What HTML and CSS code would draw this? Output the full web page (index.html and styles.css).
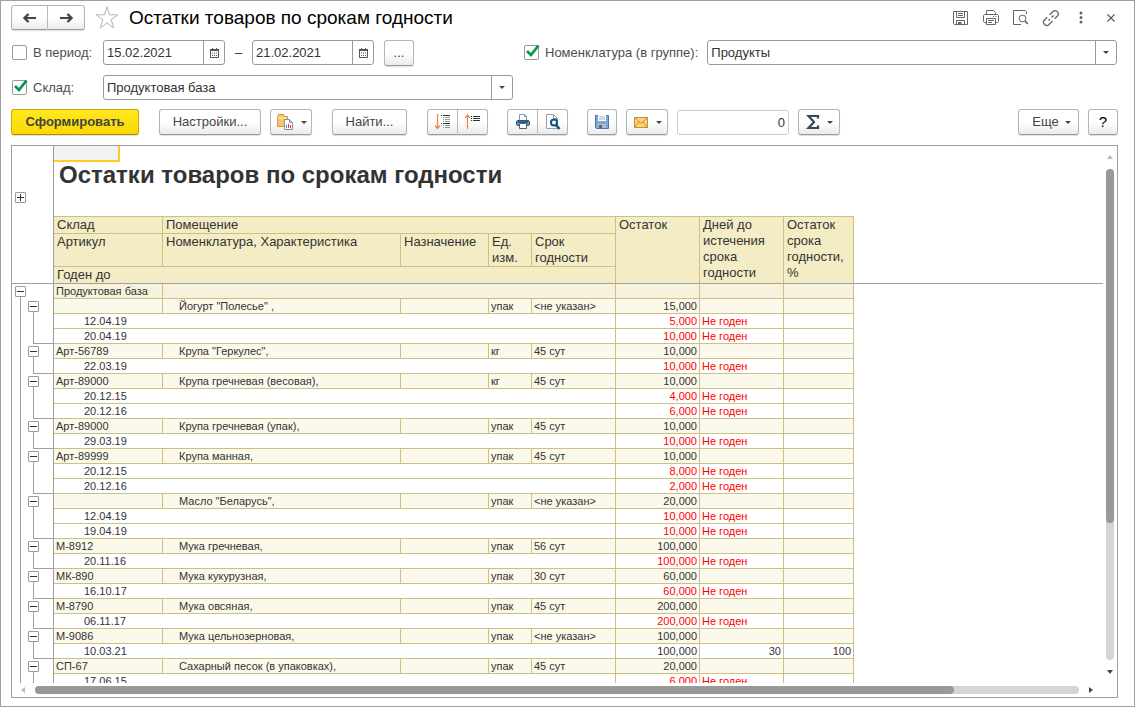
FILE: index.html
```html
<!DOCTYPE html>
<html lang="ru">
<head>
<meta charset="utf-8">
<title>Остатки товаров по срокам годности</title>
<link rel="stylesheet" href="styles.css">
</head>
<body>
<main class="window">
  <header class="titlebar">
    <div class="pair nav">
      <button class="btn" type="button" aria-label="Назад"><svg width="16" height="12" viewBox="0 0 16 12"><path d="M2 6h12" stroke="#444" stroke-width="2"/><path d="M6.500 2L2.500 6l4 4" fill="none" stroke="#444" stroke-width="2.400"/></svg></button>
      <button class="btn" type="button" aria-label="Вперед"><svg width="16" height="12" viewBox="0 0 16 12"><path d="M2 6h12" stroke="#444" stroke-width="2"/><path d="M9.500 2l4 4-4 4" fill="none" stroke="#444" stroke-width="2.400"/></svg></button>
    </div>
    <button class="plain star" type="button" aria-label="Избранное"><svg width="24" height="24" viewBox="0 0 24 24"><path d="M12 .800l2.600 8h8.200l-6.600 4.900 2.500 8.300-6.700-5-6.700 5 2.500-8.300L1.200 8.800h8.200z" fill="#fff" stroke="#adb2ba" stroke-width="1"/></svg></button>
    <h1 class="title">Остатки товаров по срокам годности</h1>
    <div class="window-tools">
      <button class="plain" type="button" aria-label="Сохранить"><svg width="16" height="16" viewBox="0 0 16 16" fill="none" stroke="#666"><path d="M.5 1.500h14v13h-13l-1-1zM3.500 1.500v6h8v-6M5 3.500h5M5 5.500h5M3.500 14.500v-4h8v4"/><path d="M5 12h3.500v2H5z" fill="#666" stroke="none"/></svg></button>
      <button class="plain" type="button" aria-label="Печать"><svg width="16" height="16" viewBox="0 0 16 16" fill="none" stroke="#666"><path d="M3.500 4.500v-4h7l2 2v2M3.500 12.500h-2l-1-1v-6l1-1h13l1 1v6l-1 1h-2M3.500 8.500h9v6h-9zM5 10.500h6M5 12.500h4M10 6.500h1M12.500 6.500h1"/></svg></button>
      <button class="plain" type="button" aria-label="Просмотр"><svg width="16" height="16" viewBox="0 0 16 16" fill="none" stroke="#666"><path d="M13.500 4V1.500l-1-1H.5v14H8"/><circle cx="9.500" cy="8.500" r="3.400"/><path d="M12 11l2.800 3" stroke-width="1.800"/></svg></button>
      <button class="plain" type="button" aria-label="Ссылка"><svg width="18" height="18" viewBox="0 0 18 18" fill="none" stroke="#666" stroke-width="1.300"><path d="M7.500 6l3.700-3.700a2.600 2.600 0 0 1 3.700 0l.8.800a2.600 2.600 0 0 1 0 3.700l-3 3M5.200 8.300l-3 3a2.600 2.600 0 0 0 0 3.700l.8.800a2.600 2.600 0 0 0 3.700 0l3.800-3.800M6.500 11.500L8 10M9.500 8.500L11.500 6.500"/></svg></button>
      <button class="plain" type="button" aria-label="Меню"><svg width="4" height="13" viewBox="0 0 4 13" fill="#666"><circle cx="2" cy="2" r="1.500"/><circle cx="2" cy="6.500" r="1.500"/><circle cx="2" cy="11" r="1.500"/></svg></button>
      <button class="plain" type="button" aria-label="Закрыть"><svg width="8" height="8" viewBox="0 0 8 8"><path d="M.5.500l7 7M7.500.500l-7 7" stroke="#555" stroke-width="1.100"/></svg></button>
    </div>
  </header>

  <form class="filters">
    <div class="filter-row">
      <div class="caption">
        <span class="check"><input type="checkbox" id="period"></span>
        <label for="period">В период:</label>
      </div>
      <div class="field date">
        <input type="text" value="15.02.2021" aria-label="Начало периода">
        <button type="button" aria-label="Календарь"><svg width="9" height="10" viewBox="0 0 9 10"><path d="M.5 1.500h8v8h-8z" fill="#fff" stroke="#555"/><path d="M0 1h9v2H0zM2 0h1v1H2zM6 0h1v1H6z" fill="#555"/><path d="M2 5h5M2 7.500h5" stroke="#555" stroke-dasharray="1 1"/></svg></button>
      </div>
      <span class="dash">–</span>
      <div class="field date">
        <input type="text" value="21.02.2021" aria-label="Конец периода">
        <button type="button" aria-label="Календарь"><svg width="9" height="10" viewBox="0 0 9 10"><path d="M.5 1.500h8v8h-8z" fill="#fff" stroke="#555"/><path d="M0 1h9v2H0zM2 0h1v1H2zM6 0h1v1H6z" fill="#555"/><path d="M2 5h5M2 7.500h5" stroke="#555" stroke-dasharray="1 1"/></svg></button>
      </div>
      <button class="btn dots" type="button">...</button>
      <div class="caption group">
        <span class="check"><input type="checkbox" id="item" checked><svg width="16" height="16" viewBox="0 0 16 16"><path d="M3 6l4 4L14.500.500" fill="none" stroke="#0b9650" stroke-width="2.800"/></svg></span>
        <label for="item">Номенклатура (в группе):</label>
      </div>
      <div class="field combo wide">
        <select aria-label="Номенклатура"><option>Продукты</option></select>
        <span class="arrow"></span>
      </div>
    </div>
    <div class="filter-row">
      <div class="caption">
        <span class="check"><input type="checkbox" id="store" checked><svg width="16" height="16" viewBox="0 0 16 16"><path d="M3 6l4 4L14.500.500" fill="none" stroke="#0b9650" stroke-width="2.800"/></svg></span>
        <label for="store">Склад:</label>
      </div>
      <div class="field combo store">
        <select aria-label="Склад"><option>Продуктовая база</option></select>
        <span class="arrow"></span>
      </div>
    </div>
  </form>

  <div class="toolbar">
    <button class="btn primary" type="button">Сформировать</button>
    <div class="tools">
      <button class="btn settings" type="button">Настройки...</button>
      <button class="btn menu" type="button" aria-label="Варианты"><svg width="18" height="18" viewBox="0 0 18 18"><path d="M1.500 4.500l1-3h5l1 2h3v10h-10z" fill="#f3c768" stroke="#d39c36"/><path d="M2 5h9" stroke="#fff1c4"/><path d="M8.500 6.500h5l3 3v7h-8z" fill="#fff" stroke="#7e93a8"/><path d="M13.500 6.500v3h3" fill="none" stroke="#7e93a8"/><path d="M10.500 15v-3" stroke="#4a86c0"/><path d="M12.500 15v-4M14.500 15v-3" stroke="#e0402a"/></svg><i class="caret"></i></button>
    </div>
    <button class="btn find" type="button">Найти...</button>
    <div class="pair">
      <button class="btn" type="button" aria-label="Развернуть"><svg width="16" height="16" viewBox="0 0 16 16" fill="none"><path d="M2.500 0v14M0 11.500l2.500 3 2.500-3" stroke="#f08048" stroke-width="1.200"/><path d="M6 1.500h1M8 1.500h7M6 9.500h1M8 9.500h7" stroke="#333"/><path d="M8 3.500h1M10 3.500h5M8 5.500h1M10 5.500h5M8 7.500h1M10 7.500h5M8 11.500h1M10 11.500h5M8 13.500h1M10 13.500h5" stroke="#999"/></svg></button>
      <button class="btn" type="button" aria-label="Свернуть"><svg width="16" height="16" viewBox="0 0 16 16" fill="none"><path d="M2.500 1v14M0 4l2.500-3L5 4" stroke="#f08048" stroke-width="1.200"/><path d="M6 2.500h1M8 2.500h7M6 4.500h1M8 4.500h7M6 6.500h1M8 6.500h7" stroke="#333"/></svg></button>
    </div>
    <div class="pair">
      <button class="btn" type="button" aria-label="Печать"><svg width="16" height="16" viewBox="0 0 16 16"><path d="M4.500 6V.500h5l2 2V6" fill="#fff" stroke="#8596a8"/><path d="M9.500.500v2h2" fill="none" stroke="#8596a8"/><rect x="1.500" y="6.500" width="13" height="5" rx="1.500" fill="#6c96c2" stroke="#2f567f"/><path d="M3 8h10" stroke="#284b71" stroke-width="1.500"/><path d="M4.500 9.500h7v5h-7z" fill="#fff" stroke="#45658a"/></svg></button>
      <button class="btn" type="button" aria-label="Предварительный просмотр"><svg width="16" height="16" viewBox="0 0 16 16"><path d="M1.500.500h7l4 4v10h-11z" fill="#fff" stroke="#8fa2b5"/><path d="M8.500.500v4h4" fill="none" stroke="#8fa2b5"/><circle cx="9" cy="8.500" r="3" fill="#fff" stroke="#10517f" stroke-width="2"/><path d="M11 11l3.500 4" stroke="#10517f" stroke-width="2.500"/></svg></button>
    </div>
    <div class="tools">
      <button class="btn icon" type="button" aria-label="Сохранить"><svg width="16" height="16" viewBox="0 0 16 16"><path d="M1.500 1.500h13v13h-12l-1-1z" fill="#7fa9d8" stroke="#4d749e"/><path d="M4 1h8v6H4z" fill="#fff"/><path d="M5 3h6M5 5h6" stroke="#9db4cc"/><path d="M4 10h8v4H4z" fill="#aebdca"/><path d="M5 11h3v3H5z" fill="#476b90"/></svg></button>
      <button class="btn menu" type="button" aria-label="Отправить"><svg width="16" height="14" viewBox="0 0 16 14"><rect x="1.500" y="2.500" width="13" height="10" fill="#f9d27c" stroke="#c98f33"/><path d="M2 3l6 5.500L14 3M2 12l4-5M14 12l-4-5" fill="none" stroke="#c98f33"/></svg><i class="caret"></i></button>
      <input class="amount" type="text" value="0" aria-label="Сумма">
      <button class="btn menu" type="button" aria-label="Итоги"><svg width="14" height="16" viewBox="0 0 14 16"><path d="M12 4.500V2H2.500L8 8l-5.500 6H12v-2.500" fill="none" stroke="#374a5c" stroke-width="2.200"/></svg><i class="caret"></i></button>
    </div>
    <div class="tools end">
      <button class="btn more" type="button">Еще<i class="caret"></i></button>
      <button class="btn help" type="button">?</button>
    </div>
  </div>

  <section class="sheet">
    <div class="view">
      <table class="report">
        <colgroup><col class="c-tree"><col class="c-art"><col class="c-item"><col class="c-use"><col class="c-unit"><col class="c-num"><col class="c-num"><col class="c-num"><col class="c-pct"><col></colgroup>
        <thead>
          <tr class="top"><td class="tree" rowspan="4"><button class="toggle plus" type="button" aria-label="Развернуть"></button></td><td class="heading" colspan="8"><div class="cursor"></div><h2>Остатки товаров по срокам годности</h2></td><td class="rest" rowspan="4"></td></tr>
          <tr class="h1"><th>Склад</th><th colspan="4">Помещение</th><th class="last" rowspan="3">Остаток</th><th class="last" rowspan="3">Дней до истечения срока годности</th><th class="last" rowspan="3">Остаток срока годности, %</th></tr>
          <tr class="h2"><th>Артикул</th><th>Номенклатура, Характеристика</th><th>Назначение</th><th>Ед. изм.</th><th>Срок годности</th></tr>
          <tr class="h1"><th class="last" colspan="5">Годен до</th></tr>
        </thead>
        <tbody>
          <tr class="store-row"><td class="tree root"><button class="toggle" type="button" aria-label="Свернуть"></button></td><td>Продуктовая база</td><td colspan="4"></td><td></td><td></td><td></td></tr>
          <tr class="item"><td class="tree"><button class="toggle" type="button" aria-label="Свернуть"></button></td><td></td><td>Йогурт "Полесье" ,</td><td></td><td>упак</td><td>&lt;не указан&gt;</td><td>15,000</td><td></td><td></td></tr>
          <tr class="lot bad"><td class="tree"></td><td colspan="5">12.04.19</td><td>5,000</td><td>Не годен</td><td></td></tr>
          <tr class="lot bad"><td class="tree end"></td><td colspan="5">20.04.19</td><td>10,000</td><td>Не годен</td><td></td></tr>
          <tr class="item"><td class="tree"><button class="toggle" type="button" aria-label="Свернуть"></button></td><td>Арт-56789</td><td>Крупа "Геркулес",</td><td></td><td>кг</td><td>45 сут</td><td>10,000</td><td></td><td></td></tr>
          <tr class="lot bad"><td class="tree end"></td><td colspan="5">22.03.19</td><td>10,000</td><td>Не годен</td><td></td></tr>
          <tr class="item"><td class="tree"><button class="toggle" type="button" aria-label="Свернуть"></button></td><td>Арт-89000</td><td>Крупа гречневая (весовая),</td><td></td><td>кг</td><td>45 сут</td><td>10,000</td><td></td><td></td></tr>
          <tr class="lot bad"><td class="tree"></td><td colspan="5">20.12.15</td><td>4,000</td><td>Не годен</td><td></td></tr>
          <tr class="lot bad"><td class="tree end"></td><td colspan="5">20.12.16</td><td>6,000</td><td>Не годен</td><td></td></tr>
          <tr class="item"><td class="tree"><button class="toggle" type="button" aria-label="Свернуть"></button></td><td>Арт-89000</td><td>Крупа гречневая (упак),</td><td></td><td>упак</td><td>45 сут</td><td>10,000</td><td></td><td></td></tr>
          <tr class="lot bad"><td class="tree end"></td><td colspan="5">29.03.19</td><td>10,000</td><td>Не годен</td><td></td></tr>
          <tr class="item"><td class="tree"><button class="toggle" type="button" aria-label="Свернуть"></button></td><td>Арт-89999</td><td>Крупа манная,</td><td></td><td>упак</td><td>45 сут</td><td>10,000</td><td></td><td></td></tr>
          <tr class="lot bad"><td class="tree"></td><td colspan="5">20.12.15</td><td>8,000</td><td>Не годен</td><td></td></tr>
          <tr class="lot bad"><td class="tree end"></td><td colspan="5">20.12.16</td><td>2,000</td><td>Не годен</td><td></td></tr>
          <tr class="item"><td class="tree"><button class="toggle" type="button" aria-label="Свернуть"></button></td><td></td><td>Масло "Беларусь",</td><td></td><td>упак</td><td>&lt;не указан&gt;</td><td>20,000</td><td></td><td></td></tr>
          <tr class="lot bad"><td class="tree"></td><td colspan="5">12.04.19</td><td>10,000</td><td>Не годен</td><td></td></tr>
          <tr class="lot bad"><td class="tree end"></td><td colspan="5">19.04.19</td><td>10,000</td><td>Не годен</td><td></td></tr>
          <tr class="item"><td class="tree"><button class="toggle" type="button" aria-label="Свернуть"></button></td><td>М-8912</td><td>Мука гречневая,</td><td></td><td>упак</td><td>56 сут</td><td>100,000</td><td></td><td></td></tr>
          <tr class="lot bad"><td class="tree end"></td><td colspan="5">20.11.16</td><td>100,000</td><td>Не годен</td><td></td></tr>
          <tr class="item"><td class="tree"><button class="toggle" type="button" aria-label="Свернуть"></button></td><td>МК-890</td><td>Мука кукурузная,</td><td></td><td>упак</td><td>30 сут</td><td>60,000</td><td></td><td></td></tr>
          <tr class="lot bad"><td class="tree end"></td><td colspan="5">16.10.17</td><td>60,000</td><td>Не годен</td><td></td></tr>
          <tr class="item"><td class="tree"><button class="toggle" type="button" aria-label="Свернуть"></button></td><td>М-8790</td><td>Мука овсяная,</td><td></td><td>упак</td><td>45 сут</td><td>200,000</td><td></td><td></td></tr>
          <tr class="lot bad"><td class="tree end"></td><td colspan="5">06.11.17</td><td>200,000</td><td>Не годен</td><td></td></tr>
          <tr class="item"><td class="tree"><button class="toggle" type="button" aria-label="Свернуть"></button></td><td>М-9086</td><td>Мука цельнозерновая,</td><td></td><td>упак</td><td>&lt;не указан&gt;</td><td>100,000</td><td></td><td></td></tr>
          <tr class="lot"><td class="tree end"></td><td colspan="5">10.03.21</td><td>100,000</td><td>30</td><td>100</td></tr>
          <tr class="item"><td class="tree"><button class="toggle" type="button" aria-label="Свернуть"></button></td><td>СП-67</td><td>Сахарный песок (в упаковках),</td><td></td><td>упак</td><td>45 сут</td><td>20,000</td><td></td><td></td></tr>
          <tr class="lot bad"><td class="tree"></td><td colspan="5">17.06.15</td><td>6,000</td><td>Не годен</td><td></td></tr>
        </tbody>
      </table>
    </div>
    <div class="vbar"><i class="tip up"></i><div class="track"><div class="thumb"></div></div><i class="tip down"></i></div>
    <div class="hbar"><i class="tip left"></i><div class="track"><div class="thumb"></div></div><i class="tip right"></i></div>
  </section>
</main>
</body>
</html>
```
FILE: styles.css
```css
* { box-sizing: border-box; }

body {
  margin: 0;
  font: 13px/16px "Liberation Sans", Arial, sans-serif;
  color: #333;
  background: #fff;
}

button, input, select { font: inherit; color: inherit; margin: 0; }
button { padding: 0; }
svg { display: block; flex: none; }

.window {
  display: flex;
  flex-direction: column;
  height: 100vh;
  padding: 4px 16px 8px 10px;
  border: 1px solid #a0a0a0;
}

/* Buttons */
.btn {
  display: flex;
  align-items: center;
  justify-content: center;
  height: 26px;
  border: 1px solid #b5b5b5;
  border-bottom-color: #9a9a9a;
  border-radius: 3px;
  background: linear-gradient(#fff 50%, #ebebeb);
  box-shadow: 0 1px 1px #ddd;
  color: #444;
}
.pair { display: flex; }
.pair .btn { width: 30px; }
.pair .btn:first-child { width: 31px; border-radius: 3px 0 0 3px; }
.pair .btn:last-child { border-left: 0; border-radius: 0 3px 3px 0; }
.plain {
  display: flex;
  align-items: center;
  justify-content: center;
  border: 0;
  background: none;
}
.caret {
  border: 3px solid transparent;
  border-top-color: #444;
  border-bottom: 0;
}

/* Title bar */
.titlebar { display: flex; align-items: center; height: 25px; margin-bottom: 10px; }
.nav .btn, .nav .btn:first-child { width: 37px; height: 25px; }
.star { margin-left: 10px; }
.title { margin: 0 0 0 10px; font-size: 19px; line-height: 24px; font-weight: 400; color: #000; }
.window-tools { display: flex; margin: 0 -8px 0 auto; }
.window-tools .plain { width: 30px; height: 24px; }

/* Filters */
.filters { display: flex; flex-direction: column; gap: 10px; margin-bottom: 9px; }
.filter-row { display: flex; align-items: center; height: 25px; padding-right: 1px; }
.caption { display: flex; align-items: center; gap: 5px; width: 92px; padding-left: 1px; color: #4d4d4d; white-space: nowrap; }
.caption.group { width: auto; margin: 0 9px 0 109px; }
.check { display: grid; width: 16px; height: 16px; }
.check > * { grid-area: 1 / 1; }
.check svg { pointer-events: none; }
.check input {
  appearance: none;
  width: 15px;
  height: 15px;
  border: 1px solid #999;
  border-radius: 2px;
  background: #fff;
}
.field {
  display: flex;
  height: 25px;
  border: 1px solid #999;
  border-radius: 3px;
  background: #fff;
  overflow: hidden;
}
.field input { flex: 1; min-width: 0; border: 0; padding: 0 3px; background: none; }
.field button { display: grid; place-items: center; width: 21px; border: 0; border-left: 1px solid #999; background: none; }
.date { width: 122px; }
.dash { width: 27px; text-align: center; }
.dots { width: 30px; margin-left: 10px; }
.combo { display: grid; }
.combo > * { grid-area: 1 / 1; }
.combo select { appearance: none; width: 100%; border: 0; padding: 0 24px 0 3px; background: none; }
.combo .arrow {
  justify-self: end;
  display: grid;
  place-items: center;
  width: 21px;
  border-left: 1px solid #999;
  pointer-events: none;
}
.combo .arrow::before { content: ""; border: 3px solid transparent; border-top-color: #444; border-bottom: 0; }
.wide { flex: 1; }
.store { width: 410px; }

/* Toolbar */
.toolbar { display: flex; align-items: center; gap: 20px; margin-bottom: 10px; }
.toolbar .pair { margin-right: -1px; }
.tools { display: flex; align-items: center; gap: 9px; }
.end { margin-left: auto; }
.primary {
  width: 128px;
  border-color: #c9ab00;
  border-bottom-color: #a88f00;
  background: linear-gradient(#ffe81f, #f9d900);
  font-weight: 700;
}
.settings { width: 102px; }
.find { width: 75px; }
.menu { gap: 7px; width: 42px; }
.icon, .help { width: 30px; }
.more { gap: 6px; width: 61px; padding-left: 6px; }
.help { color: #000; font-size: 15px; }
.amount { width: 112px; height: 25px; border: 1px solid #ccc; border-radius: 3px; padding: 0 3px; text-align: right; }

/* Report sheet */
.sheet {
  flex: 1;
  min-height: 0;
  display: grid;
  grid-template: minmax(0, 1fr) 14px / minmax(0, 1fr) 14px;
  border: 1px solid #a0a0a0;
}
.view { overflow: hidden; }
.report { width: 100%; table-layout: fixed; border-collapse: separate; border-spacing: 0; font-size: 11px; line-height: 14px; }
.c-tree { width: 42px; }
.c-art { width: 109px; }
.c-item { width: 238px; }
.c-use { width: 88px; }
.c-unit { width: 43px; }
.c-num { width: 84px; }
.c-pct { width: 70px; }

.report th, .report td {
  padding: 0 2px;
  border: 0 solid #ccc085;
  border-width: 0 1px 1px 0;
  text-align: left;
  vertical-align: top;
  white-space: nowrap;
}
.report th {
  padding: 0 3px;
  background: #f4ecc5;
  font-size: 13px;
  line-height: 16px;
  font-weight: 400;
  white-space: normal;
}
.report thead .last, .report .rest { border-bottom-color: #a0a0a0; }
.report .rest { border-right: 0; }
.report .heading { height: 71px; padding: 0; border-right: 0; }
.cursor { width: 66px; height: 16px; border: solid #fc2; border-width: 0 2px 2px 0; background: #f2f2f2; }
.heading h2 { margin: 0 0 0 5px; font-size: 24px; line-height: 26px; }
.h1 { height: 17px; }
.h2 { height: 33px; }

.report tbody tr { height: 15px; }
.store-row td { background: #f7f2dc; }
.item td { background: #fbf9eb; }
.item td:nth-child(3) { padding-left: 16px; }
.item td:nth-child(7), .lot td:nth-child(n+3) { text-align: right; }
.lot td:nth-child(2) { padding-left: 30px; }
.bad td:nth-child(n+3) { color: #f00; }
.bad td:nth-child(4) { text-align: left; }

/* Outline column: lines for both levels */
.report .tree {
  padding: 0;
  border-right-color: #a0a0a0;
  border-bottom: 0;
  background: linear-gradient(#a0a0a0, #a0a0a0) 8px 0 / 1px 100% no-repeat,
              linear-gradient(#a0a0a0, #a0a0a0) 21px 0 / 1px 100% no-repeat #fff;
}
.report thead .tree { padding-top: 46px; border-bottom: 1px solid #a0a0a0; background: #fff; }
.report .root { background: linear-gradient(#a0a0a0, #a0a0a0) 8px 100% / 1px 6px no-repeat #fff; }
.report .item .tree {
  background: linear-gradient(#a0a0a0, #a0a0a0) 8px 0 / 1px 100% no-repeat,
              linear-gradient(#a0a0a0, #a0a0a0) 21px 100% / 1px 6px no-repeat #fff;
}
.report .tree.end {
  background: linear-gradient(#a0a0a0, #a0a0a0) 8px 0 / 1px 100% no-repeat,
              linear-gradient(#a0a0a0, #a0a0a0) 21px 0 / 1px 100% no-repeat,
              linear-gradient(#a0a0a0, #a0a0a0) 21px 100% / 20px 1px no-repeat #fff;
}
.toggle {
  display: block;
  width: 11px;
  height: 11px;
  margin: 2px 0 0 3px;
  border: 1px solid #999;
  border-radius: 1px;
  background: linear-gradient(#333, #333) center / 7px 1px no-repeat #fff;
}
.item .toggle { margin-left: 16px; }
.toggle.plus {
  margin-top: 0;
  background: linear-gradient(#333, #333) center / 7px 1px no-repeat,
              linear-gradient(#333, #333) center / 1px 7px no-repeat #fff;
}

/* Scroll bars */
.vbar, .hbar { display: flex; align-items: center; }
.vbar { flex-direction: column; padding: 9px 0; gap: 10px; }
.hbar { padding: 0 10px 0 9px; gap: 10px; }
.track { flex: 1; border-radius: 4px; background: #d5d5d5; }
.vbar .track { width: 8px; }
.hbar .track { height: 8px; }
.thumb { border-radius: 4px; background: #999; }
.vbar .thumb { height: 72%; }
.hbar .thumb { width: 88%; height: 8px; }
.tip { border: 3px solid transparent; }
.up { border-top: 0; border-bottom: 4px solid #bbb; }
.down { border-bottom: 0; border-top: 4px solid #444; }
.left { border-left: 0; border-right: 4px solid #bbb; }
.right { border-right: 0; border-left: 4px solid #444; }
```
